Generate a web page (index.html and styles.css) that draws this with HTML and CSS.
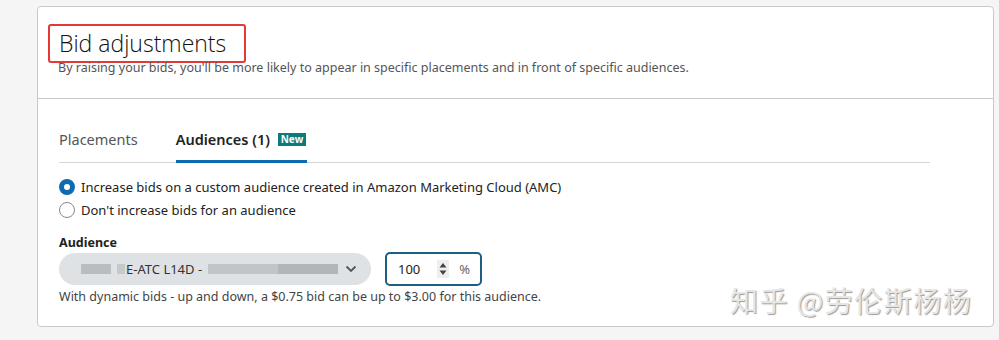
FILE: index.html
```html
<!DOCTYPE html>
<html lang="en">
<head>
  <meta charset="UTF-8">
  <title>Bid adjustments</title>
  <link rel="stylesheet" href="styles.css">
</head>
<body>
  <div class="card">
    <div class="card-header">
      <h2 class="title">Bid adjustments</h2>
      <p class="subtitle">By raising your bids, you'll be more likely to appear in specific placements and in front of specific audiences.</p>
    </div>

    <div class="card-body">
      <div class="tabs">
        <div class="tab">Placements</div>
        <div class="tab active">Audiences (1) <span class="badge">New</span></div>
      </div>

      <div class="radios">
        <label class="radio">
          <span class="dot checked"></span>
          Increase bids on a custom audience created in Amazon Marketing Cloud (AMC)
        </label>
        <label class="radio">
          <span class="dot"></span>
          Don't increase bids for an audience
        </label>
      </div>

      <div class="field-label">Audience</div>
      <div class="field-row">
        <div class="select">
          <span class="blur b1"></span><span class="blur b2"></span><span class="sel-text">E-ATC L14D -</span><span class="blur b3"></span><span class="blur b4"></span>
          <svg class="chev" width="12" height="8" viewBox="0 0 12 8"><path d="M1.5 1.5 L6 6 L10.5 1.5" fill="none" stroke="#555" stroke-width="1.8"/></svg>
        </div>
        <div class="number">
          <span class="num">100</span>
          <span class="spin">
            <svg width="8" height="14" viewBox="0 0 8 14"><path d="M4 1 L7.5 5.5 H0.5 Z M4 13 L7.5 8.5 H0.5 Z" fill="#444"/></svg>
          </span>
          <span class="pct">%</span>
        </div>
      </div>
      <p class="hint">With dynamic bids - up and down, a $0.75 bid can be up to $3.00 for this audience.</p>
    </div>

    <div class="watermark">知乎 @劳伦斯杨杨</div>
  </div>
</body>
</html>
```

FILE: styles.css
```css
body {
  margin: 0;
  background: #f5f5f5;
  font-family: "Noto Sans", "Open Sans", sans-serif;
  color: #222;
}

.card {
  position: relative;
  margin: 6px 4px 0 37px;
  width: 957px;
  height: 321px;
  box-sizing: border-box;
  background: #ffffff;
  border: 1px solid #c9c9c9;
  border-radius: 4px;
}

.card-header {
  height: 92px;
  box-sizing: border-box;
  padding: 17px 0 0 20px;
  border-bottom: 1px solid #c9c9c9;
}

.title {
  display: inline-block;
  margin: 0 0 0 -10px;
  padding: 2px 18px 3px 9px;
  border: 2px solid #e53935;
  border-radius: 3px;
  font-family: "Open Sans", "Noto Sans", sans-serif;
  font-size: 23px;
  font-weight: 300;
  line-height: 30px;
  color: #111;
}

.subtitle {
  margin: -4px 0 0;
  font-size: 12.5px;
  color: #555;
}

.card-body {
  padding: 30px 0 0 21px;
}

.tabs {
  display: flex;
  gap: 38px;
  width: 871px;
  border-bottom: 1px solid #d5d5d5;
}

.tab {
  padding: 0 0 13px;
  font-size: 14.5px;
  line-height: 20px;
  color: #555;
}

.tab.active {
  font-weight: 600;
  color: #222;
  border-bottom: 3px solid #0f6bb0;
  padding-bottom: 10px;
  margin-bottom: -1px;
  width: 131px;
}

.badge {
  display: inline-block;
  margin-left: 4px;
  padding: 0 3px;
  background: #0a7c7c;
  color: #ffffff;
  font-size: 10px;
  font-weight: 700;
  line-height: 13px;
  vertical-align: 2px;
}

.radios {
  padding-top: 12px;
}

.radio {
  display: flex;
  align-items: center;
  gap: 6px;
  height: 23px;
  font-size: 13px;
  color: #222;
}

.dot {
  width: 14px;
  height: 14px;
  border: 1px solid #888;
  border-radius: 50%;
  box-sizing: content-box;
}

.dot.checked {
  width: 6px;
  height: 6px;
  border: 5px solid #0f6bb0;
}

.field-label {
  margin-top: 13px;
  font-size: 12.5px;
  font-weight: 700;
  line-height: 18px;
}

.field-row {
  display: flex;
  align-items: center;
  gap: 14px;
  margin-top: 0;
}

.select {
  display: flex;
  align-items: center;
  flex-shrink: 0;
  width: 312px;
  height: 32px;
  box-sizing: border-box;
  padding: 0 14px 0 22px;
  background: #dfe2e5;
  border-radius: 16px;
  font-size: 13px;
  white-space: nowrap;
  color: #333;
}

.blur {
  display: inline-block;
  flex-shrink: 0;
  height: 10px;
  background: #b9bcc0;
}

.b1 { width: 30px; }
.b2 { width: 8px; margin-left: 6px; background: #c6c9cc; }
.b3 { width: 70px; margin-left: 6px; background: #c2c5c8; }
.b4 { width: 60px; background: #b3b6b9; }

.sel-text {
  margin-left: 1px;
}

.chev {
  flex-shrink: 0;
  margin-left: auto;
}

.number {
  display: flex;
  align-items: center;
  flex-shrink: 0;
  width: 97px;
  height: 34px;
  box-sizing: border-box;
  padding: 0 10px 0 11px;
  border: 2px solid #1f5e84;
  border-radius: 5px;
  font-size: 13px;
  color: #222;
}

.spin {
  display: flex;
  align-items: center;
  justify-content: center;
  width: 12px;
  height: 18px;
  margin-left: 17px;
  background: #eeeeee;
}

.pct {
  margin-left: auto;
  color: #666;
}

.hint {
  margin: 2px 0 0;
  font-size: 12.5px;
  color: #444;
}

.watermark {
  position: absolute;
  left: 692px;
  top: 273px;
  font-family: "Noto Sans CJK SC", sans-serif;
  font-size: 28px;
  letter-spacing: 1.5px;
  color: #e6e6e6;
  text-shadow: 1px 1px 1px #9a9a9a;
}
```
